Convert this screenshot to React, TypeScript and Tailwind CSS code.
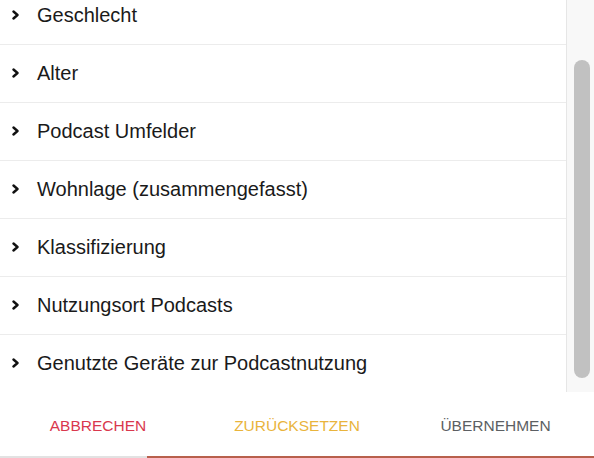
const items = [
  "Geschlecht",
  "Alter",
  "Podcast Umfelder",
  "Wohnlage (zusammengefasst)",
  "Klassifizierung",
  "Nutzungsort Podcasts",
  "Genutzte Geräte zur Podcastnutzung",
];

function Chevron() {
  return (
    <svg width="8" height="10" viewBox="0 0 8 10" className="shrink-0">
      <path d="M1.5 1.5 L5.5 5 L1.5 8.5" fill="none" stroke="#111" strokeWidth="2.4" strokeLinecap="round" strokeLinejoin="round" />
    </svg>
  );
}

export default function App() {
  return (
    <div className="flex h-[458px] w-[594px] flex-col overflow-hidden bg-white font-['Liberation_Sans',Arial,sans-serif]">
      <div className="flex h-[392px] overflow-hidden">
        <div className="flex-1 overflow-hidden">
          <ul className="mt-[-13px]">
            {items.map((label) => (
              <li
                key={label}
                className="flex h-[58px] items-center border-b border-[#ececec] pl-[12px] pb-[1px]"
              >
                <Chevron />
                <span className="ml-[17px] text-[20px] text-[#1a1a1a]">{label}</span>
              </li>
            ))}
          </ul>
        </div>
        <div className="w-[28px] border-l border-[#e6e6e6] bg-[#f8f8f8] pt-[60px]">
          <div className="ml-[7px] h-[318px] w-[16px] rounded-full bg-[#c1c1c1]" />
        </div>
      </div>
      <div className="grid h-[64px] grid-cols-3 items-center pt-[3px] text-[15.5px]">
        <button className="pr-[2px] text-center uppercase text-[#d9384e]">ABBRECHEN</button>
        <button className="text-center uppercase text-[#e9b43c]">ZURÜCKSETZEN</button>
        <button className="pl-[1px] text-center uppercase text-[#5c5f63]">ÜBERNEHMEN</button>
      </div>
      <div className="flex h-[2px]">
        <div className="w-[147px] bg-[#e2e2e2]" />
        <div className="flex-1 bg-[#b8604c]" />
      </div>
    </div>
  );
}
